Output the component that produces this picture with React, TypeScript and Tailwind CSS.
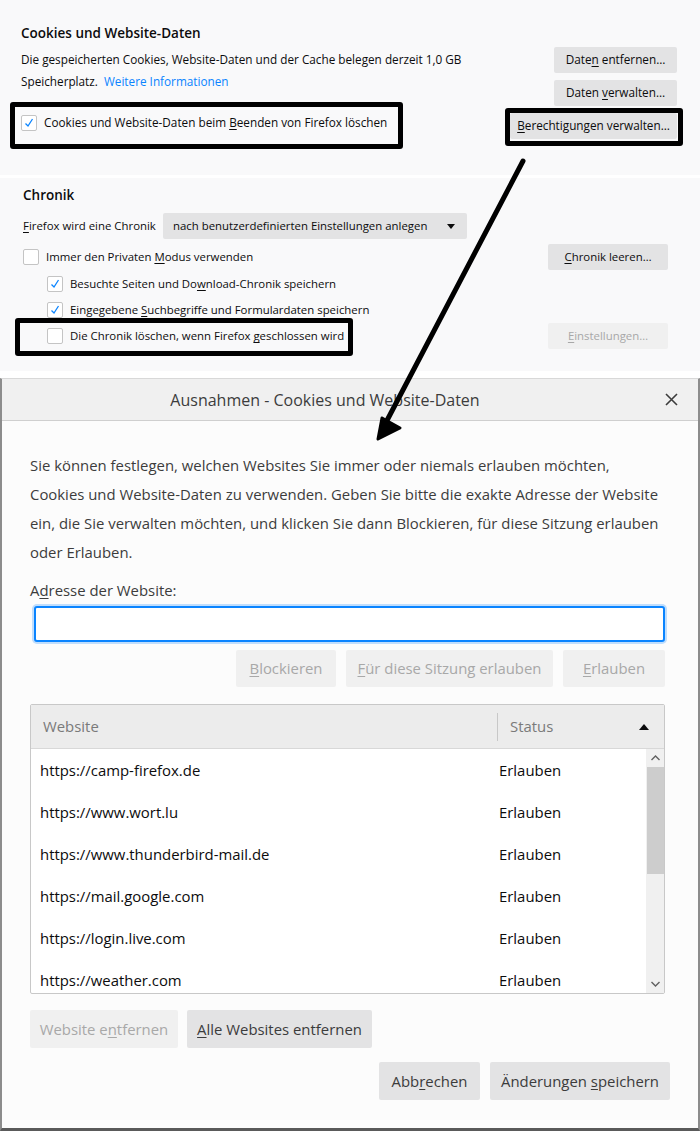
import React from "react";

const U = ({ children }: { children: React.ReactNode }) => <span className="underline underline-offset-2">{children}</span>;

const Check = ({ checked }: { checked?: boolean }) => (
  <span className="flex h-[16px] w-[16px] shrink-0 items-center justify-center rounded-[2px] border border-[#c4c4c4] bg-white">
    {checked && (
      <svg width="12" height="12" viewBox="0 0 12 12">
        <path d="M2.5 6.5 L5 9 L9.5 2" fill="none" stroke="#0a84ff" strokeWidth="1.3" />
      </svg>
    )}
  </span>
);

const Btn = ({ children, className = "", disabled }: { children: React.ReactNode; className?: string; disabled?: boolean }) => (
  <div
    className={`flex items-center justify-center rounded-[2px] ${disabled ? "bg-[#f0f0f0] text-[#a8a8a8]" : "bg-[#e3e3e4] text-[#0c0c0d]"} ${className}`}
  >
    <span>{children}</span>
  </div>
);

const sites = [
  "https://camp-firefox.de",
  "https://www.wort.lu",
  "https://www.thunderbird-mail.de",
  "https://mail.google.com",
  "https://login.live.com",
  "https://weather.com",
];

export default function App() {
  return (
    <div className="relative h-[1131px] w-[700px] overflow-hidden bg-white font-['Open_Sans',sans-serif] text-[#0c0c0d]">
      {/* Section 1 */}
      <div className="flex h-[175px] justify-between bg-[#f9f9fa] pl-[21px] pr-[23px] text-[11.75px]">
        <div className="flex flex-col pt-[22px]">
          <div className="text-[13.5px] font-semibold leading-[22px]">Cookies und Website-Daten</div>
          <div className="mt-[4px] leading-[22px]">
            Die gespeicherten Cookies, Website-Daten und der Cache belegen derzeit 1,0 GB
            <br />
            Speicherplatz. <span className="ml-[3px] text-[#0a84ff]">Weitere Informationen</span>
          </div>
          <div className="mt-[22px] flex items-center gap-[7px]">
            <Check checked />
            <span>
              Cookies und Website-Daten beim <U>B</U>eenden von Firefox löschen
            </span>
          </div>
        </div>
        <div className="flex flex-col items-end gap-[7px] pt-[47px]">
          <Btn className="h-[26px] w-[123px]">
            Date<U>n</U> entfernen…
          </Btn>
          <Btn className="h-[26px] w-[123px]">
            Daten <U>v</U>erwalten…
          </Btn>
          <Btn className="h-[26px] w-[167px]">
            <U>B</U>erechtigungen verwalten…
          </Btn>
        </div>
      </div>

      {/* Section 2 */}
      <div className="mt-[3px] flex h-[193px] flex-col bg-[#f9f9fa] pl-[23px] pr-[32px] text-[11.4px]">
        <div className="pt-[6px] text-[13.5px] font-semibold leading-[22px]">Chronik</div>
        <div className="mt-[7px] flex items-center">
          <span className="w-[140px]">
            <U>F</U>irefox wird eine Chronik
          </span>
          <div className="flex h-[26px] w-[304px] items-center justify-between rounded-[2px] bg-[#e3e3e4] pl-[10px] pr-[12px]">
            <span>nach benutzerdefinierten Einstellungen anlegen</span>
            <svg width="8" height="5" viewBox="0 0 8 5">
              <path d="M0 0 L8 0 L4 5 Z" fill="#0c0c0d" />
            </svg>
          </div>
        </div>
        <div className="mt-[5px] flex items-center justify-between">
          <div className="flex items-center gap-[7px]">
            <Check />
            <span>
              Immer den Privaten <U>M</U>odus verwenden
            </span>
          </div>
          <Btn className="h-[26px] w-[120px]">
            <U>C</U>hronik leeren…
          </Btn>
        </div>
        <div className="ml-[24px] mt-[1px] flex h-[26px] items-center gap-[7px]">
          <Check checked />
          <span>
            Besuchte Seiten und Do<U>w</U>nload-Chronik speichern
          </span>
        </div>
        <div className="ml-[24px] flex h-[26px] items-center gap-[7px]">
          <Check checked />
          <span>
            Eingegebene <U>S</U>uchbegriffe und Formulardaten speichern
          </span>
        </div>
        <div className="flex items-center justify-between">
          <div className="ml-[24px] flex items-center gap-[7px]">
            <Check />
            <span>
              Die Chronik löschen, wenn Firefox <U>g</U>eschlossen wird
            </span>
          </div>
          <Btn disabled className="h-[26px] w-[120px]">
            <U>E</U>instellungen…
          </Btn>
        </div>
      </div>

      {/* Dialog */}
      <div className="mt-[7px] flex h-[753px] flex-col border-b-[3px] border-l-2 border-r-2 border-t border-b-[#5a5a5a] border-l-[#8c8c8c] border-r-[#8c8c8c] border-t-[#d8d8d8] bg-[#fcfcfc] text-[#3c3c3c]">
        <div className="relative flex h-[42px] shrink-0 items-center justify-center border-b border-[#cfcfcf] bg-[#f0f0f0] text-[16px]">
          <span className="-ml-[50px]">Ausnahmen - Cookies und Website-Daten</span>
          <svg className="absolute right-[20px] top-[14px]" width="13" height="13" viewBox="0 0 13 13">
            <path d="M1 1 L12 12 M12 1 L1 12" stroke="#3c3c3c" strokeWidth="1.6" />
          </svg>
        </div>
        <div className="flex flex-col pl-[28px] pr-[33px] text-[14.9px]">
          <p className="mt-[30px] leading-[29px]">
            Sie können festlegen, welchen Websites Sie immer oder niemals erlauben möchten,
            <br />
            Cookies und Website-Daten zu verwenden. Geben Sie bitte die exakte Adresse der Website
            <br />
            ein, die Sie verwalten möchten, und klicken Sie dann Blockieren, für diese Sitzung erlauben
            <br />
            oder Erlauben.
          </p>
          <div className="mt-[9px] leading-[29px]">
            A<U>d</U>resse der Website:
          </div>
          <div className="ml-[4px] mt-[1px] h-[36px] rounded-[3px] border-2 border-[#0a84ff] bg-white shadow-[0_0_0_2px_rgba(10,132,255,0.25)]" />
          <div className="mt-[8px] flex justify-end gap-[10px]">
            <Btn disabled className="h-[37px] w-[100px]">
              <U>B</U>lockieren
            </Btn>
            <Btn disabled className="h-[37px] w-[207px]">
              <U>F</U>ür diese Sitzung erlauben
            </Btn>
            <Btn disabled className="h-[37px] w-[102px]">
              <U>E</U>rlauben
            </Btn>
          </div>
          <div className="mt-[17px] flex h-[290px] flex-col overflow-hidden rounded-[2px] border border-[#c8c8c8] bg-white">
            <div className="flex h-[44px] shrink-0 items-center border-b border-[#d8d8d8] bg-[#ececec] text-[#7a7a7a]">
              <span className="w-[466px] pl-[12px]">Website</span>
              <span className="h-[28px] w-px bg-[#c8c8c8]" />
              <span className="flex-1 pl-[12px]">Status</span>
              <svg className="mr-[15px]" width="10" height="6" viewBox="0 0 10 6">
                <path d="M0 6 L5 0 L10 6 Z" fill="#0c0c0d" />
              </svg>
            </div>
            <div className="flex min-h-0 flex-1">
              <div className="flex-1 overflow-hidden text-[#0c0c0d]">
                {sites.map((s) => (
                  <div key={s} className="flex h-[42px] shrink-0 items-center">
                    <span className="w-[468px] pl-[9px]">{s}</span>
                    <span>Erlauben</span>
                  </div>
                ))}
              </div>
              <div className="flex w-[18px] flex-col items-center bg-[#f0f0f0]">
                <svg className="mt-[6px]" width="9" height="6" viewBox="0 0 9 6">
                  <path d="M0.5 5 L4.5 1 L8.5 5" fill="none" stroke="#606060" strokeWidth="1.4" />
                </svg>
                <div className="mt-[6px] h-[107px] w-[17px] bg-[#cdcdcd]" />
                <div className="flex-1" />
                <svg className="mb-[6px]" width="9" height="6" viewBox="0 0 9 6">
                  <path d="M0.5 1 L4.5 5 L8.5 1" fill="none" stroke="#606060" strokeWidth="1.4" />
                </svg>
              </div>
            </div>
          </div>
          <div className="mt-[16px] flex gap-[9px]">
            <Btn disabled className="h-[38px] w-[148px]">
              Website e<U>n</U>tfernen
            </Btn>
            <Btn className="h-[38px] w-[185px] text-[#3c3c3c]">
              <U>A</U>lle Websites entfernen
            </Btn>
          </div>
          <div className="mr-[-5px] mt-[14px] flex justify-end gap-[10px]">
            <Btn className="h-[38px] w-[101px] text-[#3c3c3c]">
              Abb<U>r</U>echen
            </Btn>
            <Btn className="h-[38px] w-[180px] text-[#3c3c3c]">
              Änderungen <U>s</U>peichern
            </Btn>
          </div>
        </div>
      </div>

      {/* Annotations */}
      <div className="pointer-events-none absolute left-[10px] top-[102px] h-[47px] w-[393px] rounded-[3px] border-[5px] border-black" />
      <div className="pointer-events-none absolute left-[505px] top-[108px] h-[38px] w-[178px] rounded-[3px] border-[5px] border-black" />
      <div className="pointer-events-none absolute left-[15px] top-[318px] h-[38px] w-[338px] rounded-[3px] border-[5px] border-black" />
      <svg className="pointer-events-none absolute left-0 top-0" width="700" height="1131" viewBox="0 0 700 1131">
        <path d="M523 161 L382 430" stroke="black" strokeWidth="5" strokeLinecap="round" />
        <path d="M378 439 L382 418 L400 428 Z" fill="black" stroke="black" strokeWidth="3" strokeLinejoin="round" />
      </svg>
    </div>
  );
}
